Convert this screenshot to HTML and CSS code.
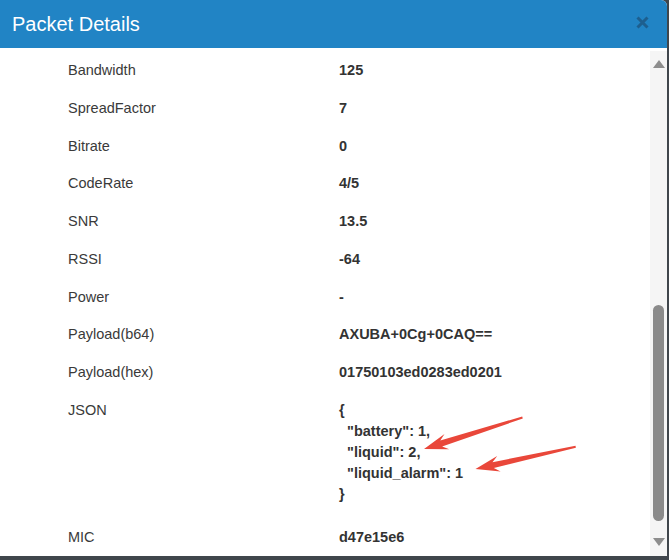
FILE: index.html
```html
<!DOCTYPE html>
<html>
<head>
<meta charset="utf-8">
<link rel="stylesheet" href="styles.css">
</head>
<body>
<div class="modal">
  <div class="header">
    <div class="title">Packet Details</div>
    <svg class="close" width="13" height="13" viewBox="0 0 13 13"><path d="M1.5 1.5 L11.5 11.5 M11.5 1.5 L1.5 11.5" stroke="#1d5f8f" stroke-width="3" stroke-linecap="butt"/></svg>
  </div>
  <div class="main">
    <div class="content">
      <div class="row"><div class="label">Bandwidth</div><div class="value">125</div></div>
      <div class="row"><div class="label">SpreadFactor</div><div class="value">7</div></div>
      <div class="row"><div class="label">Bitrate</div><div class="value">0</div></div>
      <div class="row"><div class="label">CodeRate</div><div class="value">4/5</div></div>
      <div class="row"><div class="label">SNR</div><div class="value">13.5</div></div>
      <div class="row"><div class="label">RSSI</div><div class="value">-64</div></div>
      <div class="row"><div class="label">Power</div><div class="value">-</div></div>
      <div class="row"><div class="label">Payload(b64)</div><div class="value">AXUBA+0Cg+0CAQ==</div></div>
      <div class="row"><div class="label">Payload(hex)</div><div class="value">01750103ed0283ed0201</div></div>
      <div class="row json-row"><div class="label">JSON</div><pre class="value json">{
  "battery": 1,
  "liquid": 2,
  "liquid_alarm": 1
}</pre></div>
      <div class="row"><div class="label">MIC</div><div class="value">d47e15e6</div></div>
    </div>
    <div class="scrollbar">
      <div class="arrow-up"></div>
      <div class="track"><div class="thumb"></div></div>
      <div class="arrow-down"></div>
    </div>
  </div>
</div>
<svg class="annot" width="669" height="560" viewBox="0 0 669 560">
  <polygon fill="#e9473a" points="424,449 449.3,449.3 442.1,446.4 522.8,418.5 522.2,416.5 440.3,440.6 444.5,434.1"/>
  <polygon fill="#e9473a" points="475.5,469 500.6,471.6 493.8,468 575.9,447.7 575.5,445.7 492.5,462.2 497.2,456"/>
</svg>
</body>
</html>
```
FILE: styles.css
```css
html, body {
  margin: 0;
  padding: 0;
}
body {
  width: 669px;
  height: 560px;
  background: #40464c;
  font-family: "Liberation Sans", Arial, sans-serif;
  position: relative;
  overflow: hidden;
}
.modal {
  width: 667px;
  height: 556px;
  background: #fff;
  border-top-right-radius: 6px;
  overflow: hidden;
  display: flex;
  flex-direction: column;
}
.header {
  height: 48px;
  flex: none;
  background: #2184c5;
  display: flex;
  align-items: center;
  justify-content: space-between;
  padding: 0 18px 0 12px;
}
.title {
  color: #fff;
  font-size: 20px;
  margin-top: 1px;
}
.close {
  margin-top: -4px;
}
.main {
  flex: 1;
  display: flex;
  min-height: 0;
}
.content {
  flex: 1;
  padding-top: 4px;
}
.row {
  display: grid;
  grid-template-columns: 271px 1fr;
  padding: 9px 0 9px 68px;
  line-height: 19.75px;
  font-size: 14.5px;
}
.label {
  color: #3a3a3a;
  font-size: 14.5px;
}
.value {
  color: #333;
  font-weight: bold;
}
.json-row {
  padding-top: 8px;
  padding-bottom: 14px;
}
.json-row .label {
  line-height: 21px;
}
.json {
  margin: 0;
  font-family: "Liberation Sans", Arial, sans-serif;
  font-size: 14.5px;
  line-height: 21px;
  white-space: pre;
}
.scrollbar {
  width: 17px;
  flex: none;
  background: #f5f5f5;
  display: flex;
  flex-direction: column;
  align-items: center;
  margin-top: 3px;
}
.arrow-up {
  margin-top: 9px;
  width: 0;
  height: 0;
  border-left: 6px solid transparent;
  border-right: 6px solid transparent;
  border-bottom: 8px solid #8d8d8d;
}
.track {
  flex: 1;
  width: 100%;
  display: flex;
  flex-direction: column;
  justify-content: flex-end;
  align-items: center;
  padding-bottom: 17px;
}
.thumb {
  width: 11px;
  height: 216px;
  border-radius: 6px;
  background: #8a8a8a;
}
.arrow-down {
  margin-bottom: 10px;
  width: 0;
  height: 0;
  border-left: 6px solid transparent;
  border-right: 6px solid transparent;
  border-top: 8px solid #8d8d8d;
}
.annot {
  position: absolute;
  left: 0;
  top: 0;
  pointer-events: none;
}
```
